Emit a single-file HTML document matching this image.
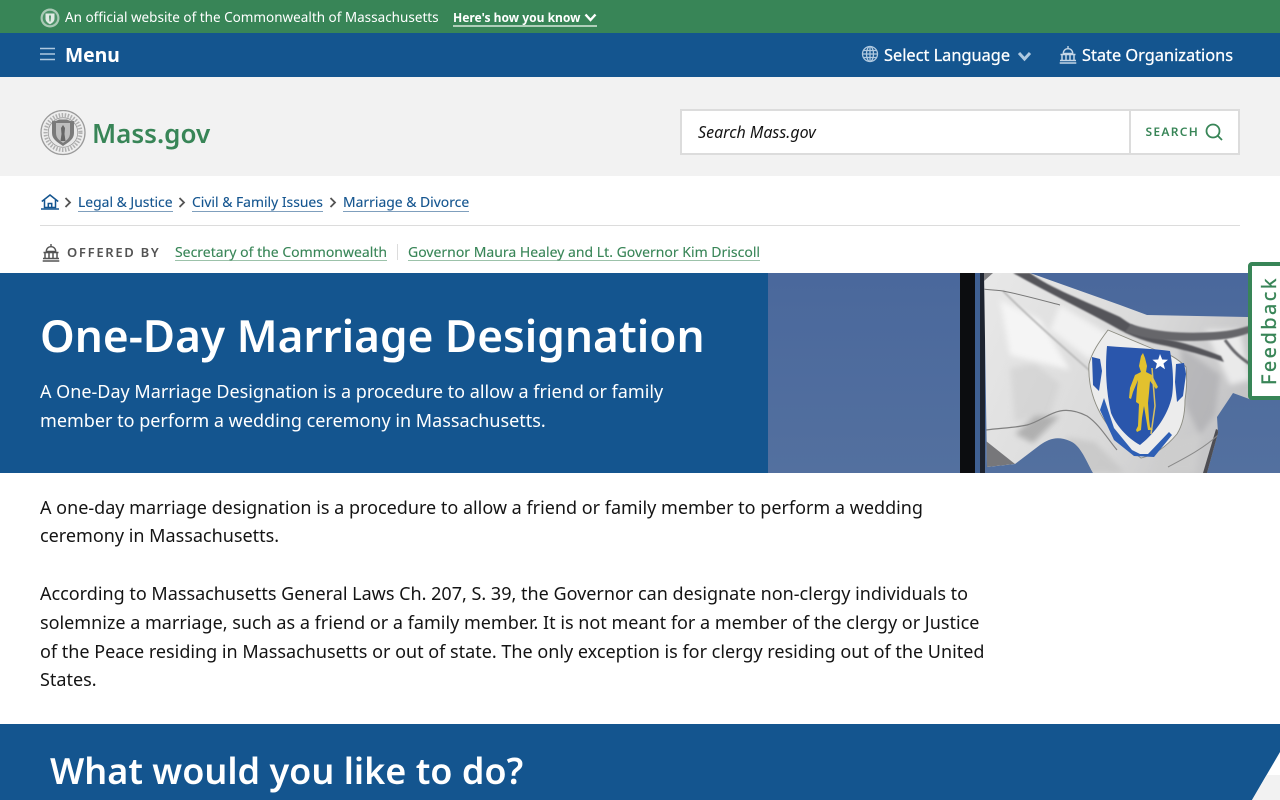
<!DOCTYPE html>
<html lang="en">
<head>
<meta charset="utf-8">
<title>One-Day Marriage Designation | Mass.gov</title>
<style>
html,body{margin:0;padding:0;background:#fff}
body{width:1280px;height:800px;overflow:hidden;position:relative;font-family:"Noto Sans","Liberation Sans",sans-serif;color:#141414}
.a{position:absolute;white-space:nowrap;display:block}
.bar{position:absolute;left:0;width:1280px}
a{color:inherit;text-decoration:none}
svg{position:absolute;display:block}
.p{font-size:18px;line-height:28px;color:#141414;left:40px}
.bc{top:193px;font-size:13.900px;line-height:20px;color:#14558f;border-bottom:1px solid #7f9fbd;height:18px;-webkit-text-stroke:.12px #14558f}
.of{top:243px;font-size:14px;line-height:20px;color:#388557;border-bottom:1px solid #9cc2aa;height:17px;-webkit-text-stroke:.12px #388557}
</style>
</head>
<body>
<div class="bar" style="top:0;height:33px;background:#388557"></div>
<div class="bar" style="top:33px;height:44px;background:#14558f"></div>
<div class="bar" style="top:77px;height:99px;background:#f2f2f2"></div>

<svg style="left:40px;top:8px" width="20" height="20" viewBox="0 0 20 20"><circle cx="10" cy="10" r="9.500" fill="#a9c9b5"/><circle cx="10" cy="10" r="7.300" fill="#4b9268"/><path d="M5.500 5.500h9v5c0 3-2.200 4.500-4.500 5.800C7.700 15 5.500 13.500 5.500 10.500z" fill="#dfeae3"/><path d="M10 6.500l1 2-.5 5h-1l-.5-5z" fill="#4b9268"/></svg>
<span class="a" style="left:65px;top:8px;font-size:13.500px;line-height:18px;color:#fff">An official website of the Commonwealth of Massachusetts</span>
<a class="a" style="left:453px;top:9px;font-size:12.050px;line-height:17px;font-weight:700;color:#fff;border-bottom:2px solid #afcfba;width:144px;height:16px">Here's how you know</a>
<svg style="left:584px;top:13px" width="13" height="10" viewBox="0 0 13 10"><path d="M1.500 1.500l5 5.500 5-5.500" fill="none" stroke="#fff" stroke-width="2.400"/></svg>

<svg style="left:40px;top:47px" width="15" height="14" viewBox="0 0 15 14"><path d="M0 1.500h15M0 7h15M0 12.500h15" stroke="#afc9e0" stroke-width="1.500"/></svg>
<span class="a" style="left:65px;top:41px;font-size:19.300px;line-height:28px;font-weight:700;color:#fff">Menu</span>

<svg style="left:861px;top:45px" width="18" height="18" viewBox="0 0 18 18" fill="none" stroke="#afc9e0" stroke-width="1.300"><circle cx="9" cy="9" r="7.500"/><ellipse cx="9" cy="9" rx="3.500" ry="7.500"/><path d="M9 1.500v15M1.500 9h15M2.500 5.500h13M2.500 12.500h13"/></svg>
<span class="a" style="left:884px;top:42px;font-size:16.350px;line-height:26px;-webkit-text-stroke:.25px #fff;color:#fff">Select Language</span>
<svg style="left:1017px;top:51px" width="15" height="12" viewBox="0 0 15 12"><path d="M2 2l5.500 6 5.500-6" fill="none" stroke="#afc9e0" stroke-width="3"/></svg>
<svg style="left:1059px;top:46px" width="18" height="18" viewBox="0 0 18 18" fill="none" stroke="#c4d6e7" stroke-width="1.400"><path d="M9 0v2.500M4.300 7.500C4.300 4.500 6.300 2.700 9 2.700s4.700 1.800 4.700 4.800z"/><path d="M1.500 8.500h15M3 9v5M7 9v5M11 9v5M15 9v5M1 14.500h16M.7 17h16.600" stroke-width="1.500"/></svg>
<span class="a" style="left:1082px;top:42px;font-size:16.350px;line-height:26px;-webkit-text-stroke:.25px #fff;color:#fff">State Organizations</span>

<svg style="left:40px;top:110px" width="46" height="46" viewBox="0 0 46 46"><circle cx="23" cy="22.500" r="22" fill="#eeeeee" stroke="#9a9a9a" stroke-width="1.300"/><circle cx="23" cy="22.500" r="17.500" fill="none" stroke="#b0b0b0" stroke-width="4" stroke-dasharray="1.500 1.500"/><circle cx="23" cy="22.500" r="14.800" fill="#e8e8e8" stroke="#9a9a9a" stroke-width=".8"/><path d="M12 11c3 .5 5-.5 7-1.500h8c2 1 4 2 7 1.500v12c0 6-5 9-11 13-6-4-11-7-11-13z" fill="#7a7a7a"/><path d="M16 13h14v10c0 5-3.500 7.500-7 10-3.500-2.500-7-5-7-10z" fill="#bdbdbd"/><path d="M23 15l2 3-.5 6 1 7h-5l1-7-.5-6z" fill="#666"/></svg>
<span class="a" style="left:92px;top:113px;font-size:26px;line-height:40px;font-weight:600;color:#388557">Mass.gov</span>

<div class="a" style="left:680px;top:109px;width:560px;height:46px;box-sizing:border-box;background:#fff;border:2px solid #dcdcdc"></div>
<div class="a" style="left:1129px;top:109px;width:2px;height:46px;background:#dcdcdc"></div>
<span class="a" style="left:698px;top:121px;font-size:16px;line-height:22px;font-style:italic;color:#141414">Search Mass.gov</span>
<span class="a" style="left:1145.500px;top:123px;font-size:12px;line-height:17px;font-weight:600;letter-spacing:1.300px;color:#388557">SEARCH</span>
<svg style="left:1205px;top:123px" width="18" height="18" viewBox="0 0 18 18" fill="none" stroke="#388557" stroke-width="1.800"><circle cx="8" cy="8" r="6.500"/><path d="M12.500 12.500l4.500 4.500"/></svg>

<svg style="left:41px;top:194px" width="18" height="16" viewBox="0 0 18 16" fill="none" stroke="#14558f" stroke-width="1.500"><path d="M.8 7.500L9 1l8.200 6.500M3.500 6v7.500h11V6M7.300 13.500V9.500h3.400v4"/><path d="M0 15h18" stroke-width="1.500"/></svg>
<svg style="left:64px;top:197px" width="8" height="11" viewBox="0 0 8 11"><path d="M1.500 1l4.500 4.500L1.500 10" fill="none" stroke="#535353" stroke-width="1.800"/></svg>
<a class="a bc" style="left:78px">Legal &amp; Justice</a>
<svg style="left:178px;top:197px" width="8" height="11" viewBox="0 0 8 11"><path d="M1.500 1l4.500 4.500L1.500 10" fill="none" stroke="#535353" stroke-width="1.800"/></svg>
<a class="a bc" style="left:192px">Civil &amp; Family Issues</a>
<svg style="left:329px;top:197px" width="8" height="11" viewBox="0 0 8 11"><path d="M1.500 1l4.500 4.500L1.500 10" fill="none" stroke="#535353" stroke-width="1.800"/></svg>
<a class="a bc" style="left:343px">Marriage &amp; Divorce</a>
<div class="a" style="left:40px;top:225px;width:1200px;height:1px;background:#dcdcdc"></div>

<svg style="left:42px;top:244px" width="18" height="18" viewBox="0 0 18 18" fill="none" stroke="#535353" stroke-width="1.400"><path d="M9 0v2.500M4.300 7.500C4.300 4.500 6.300 2.700 9 2.700s4.700 1.800 4.700 4.800z"/><path d="M1.500 8.500h15M3 9v5M7 9v5M11 9v5M15 9v5M1 14.500h16M.7 17h16.600" stroke-width="1.500"/></svg>
<span class="a" style="left:67px;top:243px;font-size:13px;line-height:18px;font-weight:600;letter-spacing:1.700px;color:#535353">OFFERED BY</span>
<a class="a of" style="left:175px">Secretary of the Commonwealth</a>
<div class="a" style="left:397px;top:244px;width:1px;height:16px;background:#dcdcdc"></div>
<a class="a of" style="left:408px">Governor Maura Healey and Lt. Governor Kim Driscoll</a>

<div class="bar" style="top:273px;height:200px;background:#14558f;width:768px"></div>
<svg style="left:768px;top:273px" width="512" height="200" viewBox="768 273 512 200">
<defs>
<linearGradient id="sky" x1="0" y1="0" x2="0" y2="1"><stop offset="0" stop-color="#4a689c"/><stop offset="1" stop-color="#53709f"/></linearGradient>
<linearGradient id="cloth" gradientUnits="userSpaceOnUse" x1="985" y1="300" x2="1260" y2="420"><stop offset="0" stop-color="#e7e7e7"/><stop offset=".55" stop-color="#d9d9d9"/><stop offset="1" stop-color="#bfbfc1"/></linearGradient>
<filter id="b3" x="-20%" y="-20%" width="140%" height="140%"><feGaussianBlur stdDeviation="3"/></filter>
<filter id="b1" x="-20%" y="-20%" width="140%" height="140%"><feGaussianBlur stdDeviation=".7"/></filter>
<filter id="b0" x="-20%" y="-20%" width="140%" height="140%"><feGaussianBlur stdDeviation=".35"/></filter>
<clipPath id="fl"><path d="M984 273H1030L1120 305 1147 315 1247 317H1280V400H1252L1233 393 1217 417 1218 433 1207 473H1093C1085 458 1080 445 1070 441 1058 436 1050 438 1040 445L1015 464 987 467z"/></clipPath>
</defs>
<rect x="768" y="273" width="512" height="200" fill="url(#sky)"/>
<rect x="975" y="273" width="5" height="200" fill="#3f5f92"/>
<rect x="960" y="273" width="15" height="200" fill="#0c0d10"/>
<rect x="980" y="273" width="5" height="200" fill="#1e2430"/>
<path d="M984 273H1030L1120 305 1147 315 1247 317H1280V400H1252L1233 393 1217 417 1218 433 1207 473H1093C1085 458 1080 445 1070 441 1058 436 1050 438 1040 445L1015 464 987 467z" fill="url(#cloth)"/>
<g clip-path="url(#fl)">
<g filter="url(#b3)">
<path d="M1010 368l25-4 25 20-10 30-35 8z" fill="#c6c6c6" opacity=".4"/>
<path d="M1033 443l27-27-25 0-20 18z" fill="#a8a8a8" opacity=".85"/>
<path d="M1065 437l30 5 30 31h-40z" fill="#c6c6c6" opacity=".8"/>
<path d="M1180 345l40 30-5 40-15 20-15-30z" fill="#a9a9ab" opacity=".6"/>
<path d="M1205 330l35 0 10 50-20 5z" fill="#f2f2f2" opacity=".8"/>
<path d="M1000 300l40 20 30 50-60-15z" fill="#f5f5f5"/>
<path d="M1060 305l50 30-20 25-40-30z" fill="#f2f2f2"/>
<path d="M1160 445l40-12-5 40h-40z" fill="#cdcdcd"/>
</g>
<path d="M1003 291c30 30 70 65 110 100" fill="none" stroke="#bdbdbd" stroke-width="2" filter="url(#b1)"/>
<path d="M1013 273c35 20 70 36 107 57 15 8 30 13 47 16 25 6 40 10 57 16l-3-6c-18-7-30-11-46-15-22-4-38-12-55-24-35-16-70-29-90-44z" fill="#55555a" filter="url(#b1)"/>
<path d="M1125 332c30 10 60 10 90 8 15-1 30-4 45-12l-1-6c-14 6-28 9-45 10-30 2-60 0-83-8z" fill="#66666b" filter="url(#b1)"/>
<path d="M1225 340c6 8 12 16 25 24" stroke="#66666b" stroke-width="3" fill="none" filter="url(#b1)"/>
<path d="M986 441l29 23-28 3z" fill="#77777a"/>
<path d="M1203 473l13-44 4 2-6 42z" fill="#4e4e52" filter="url(#b0)"/>
<path d="M983 289c7 1 14 1 20 2 20 4 38 9 57 14" fill="none" stroke="#777" stroke-width="1" filter="url(#b0)"/>
<path d="M986 430c14-2 28-2 41-5 12-3 22-12 33-14 10-2 19 1 27 5 12 8 20 22 30 34" fill="none" stroke="#808080" stroke-width="1.200" filter="url(#b0)"/>
<path d="M1168 467c15-8 35-18 50-32" fill="none" stroke="#8a8a8a" stroke-width="1" filter="url(#b0)"/>
</g>
<path d="M984 273h9l-9 8z" fill="#7d7d80"/>
<g filter="url(#b0)">
<path d="M1108 330c-9 12-16 22-19 34 -1 18 3 36 14 54 10 16 24 30 38 40 14-3 26-12 36-24 5-8 8-18 8-34 2-14 2-22 1-33-8-8-18-14-28-16z" fill="#ececec" stroke="#8b8b80" stroke-width=".9"/>
<path d="M1107 346c20 2 42 2 63 5 3 16 4 32 2 45-4 20-18 38-32 49-14-8-24-20-29-32-5-22-6-45-4-67z" fill="#2a56ac"/>
<path d="M1092 357l8 2 2 12-3 20-6-6zM1176 364l8-1 2 11-3 22-6 6-2-20z" fill="#2a56ac"/>
<path d="M1104 398l10 30 18 22 8 4 8 0 21-22 3 3-18 22-20-1-20-16-14-30z" fill="#2f5fb5"/>
<path d="M1141 356l2-3 2 5 2 8-1 6 6 3 6 12-2 2-6-8-1 12-1 10 1 16 1 8 3 3-5 0-2-12-2-12-2 12-1 12-4 2-1-2 2-4 1-22-3-2 1-14 1-8-5 12-2 7-2-1 1-10 5-13 6-3-2-6z" fill="#e2c12d"/>
<path d="M1152 368l3 38-4 28" fill="none" stroke="#d8c060" stroke-width="1.500"/>
<path d="M1160 354l2.200 5.500 5.800.3-4.500 3.700 1.500 5.700-4.800-3.200-4.800 3.200 1.500-5.700-4.500-3.700 5.800-.3z" fill="#fff"/>
</g>
</svg>

<span class="a" style="left:40px;top:305px;font-size:44.130px;line-height:60px;font-weight:600;color:#fff">One-Day Marriage Designation</span>
<span class="a" style="left:40px;top:378px;font-size:18px;line-height:29px;color:#fff">A One-Day Marriage Designation is a procedure to allow a friend or family<br>member to perform a wedding ceremony in Massachusetts.</span>

<div class="a" style="left:1248px;top:262px;width:40px;height:138px;box-sizing:border-box;background:#fff;border:4px solid #388557;border-radius:4px"></div>
<span class="a" style="left:1257px;top:385px;font-size:20px;line-height:24px;letter-spacing:2.500px;-webkit-text-stroke:.3px #388557;color:#388557;transform-origin:0 0;transform:rotate(-90deg)">Feedback</span>

<span class="a p" style="top:494px">A one-day marriage designation is a procedure to allow a friend or family member to perform a wedding</span>
<span class="a p" style="top:522px">ceremony in Massachusetts.</span>
<span class="a p" style="top:580px">According to Massachusetts General Laws Ch. 207, S. 39, the Governor can designate non-clergy individuals to</span>
<span class="a p" style="top:609px">solemnize a marriage, such as a friend or a family member. It is not meant for a member of the clergy or Justice</span>
<span class="a p" style="top:638px">of the Peace residing in Massachusetts or out of state. The only exception is for clergy residing out of the United</span>
<span class="a p" style="top:666px">States.</span>

<div class="bar" style="top:724px;height:76px;background:#14558f"></div>
<svg style="left:1250px;top:750px" width="30" height="50" viewBox="0 0 30 50"><path d="M30 2L2 50h28z" fill="#fff"/><path d="M16.600 25H30v25H2z" fill="#f2f2f2"/></svg>
<span class="a" style="left:50px;top:745px;font-size:36px;line-height:52px;font-weight:600;color:#fff">What would you like to do?</span>
</body>
</html>
